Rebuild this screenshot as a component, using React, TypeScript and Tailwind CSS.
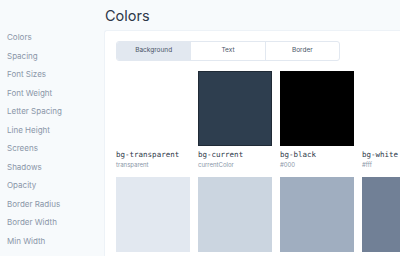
const navItems = [
  'Colors',
  'Spacing',
  'Font Sizes',
  'Font Weight',
  'Letter Spacing',
  'Line Height',
  'Screens',
  'Shadows',
  'Opacity',
  'Border Radius',
  'Border Width',
  'Min Width',
]

const swatches = [
  { name: 'bg-transparent', value: 'transparent', cls: 'bg-transparent' },
  { name: 'bg-current', value: 'currentColor', cls: 'bg-[#2e3e4f] border border-[#1f2a36]' },
  { name: 'bg-black', value: '#000', cls: 'bg-black' },
  { name: 'bg-white', value: '#fff', cls: 'bg-white' },
  { name: 'bg-gray-300', value: '#e2e8f0', cls: 'bg-[#e2e8f0]' },
  { name: 'bg-gray-400', value: '#cbd5e0', cls: 'bg-[#cbd5e0]' },
  { name: 'bg-gray-500', value: '#a0aec0', cls: 'bg-[#a0aec0]' },
  { name: 'bg-gray-600', value: '#718096', cls: 'bg-[#718096]' },
]

export default function App() {
  return (
    <div
      className="flex w-[400px] h-[256px] overflow-hidden bg-[#f7fafc]"
      style={{ fontFamily: 'Inter, "Noto Sans", sans-serif' }}
    >
      {/* Sidebar */}
      <nav className="w-[104px] shrink-0 pl-[7px] pt-[31px] flex flex-col">
        {navItems.map((item) => (
          <span key={item} className="h-[18.5px] text-[8px] leading-[12px] text-[#8a96a8]">
            {item}
          </span>
        ))}
      </nav>

      {/* Main */}
      <main className="flex-1 flex flex-col min-w-0">
        <h1 className="pl-[1px] pt-[7px] h-[30px] text-[14.5px] leading-[18px] text-[#2d3748]">Colors</h1>
        <div className="flex-1 bg-white rounded-tl-[3px] border-l border-t border-[#edf2f7] pl-[11px] pt-[10px]">
          {/* Tabs */}
          <div className="flex w-[224px] h-[20px] rounded-[3px] border border-[#e2e8f0] overflow-hidden text-[6.5px] text-[#4a5568]">
            <div className="flex-1 flex items-center justify-center bg-[#e2e8f0]">Background</div>
            <div className="flex-1 flex items-center justify-center border-l border-[#e2e8f0]">Text</div>
            <div className="flex-1 flex items-center justify-center border-l border-[#e2e8f0]">Border</div>
          </div>

          {/* Swatches */}
          <div className="grid grid-cols-[repeat(4,74px)] gap-x-[8px] gap-y-[7px] mt-[10px]">
            {swatches.map((s) => (
              <div key={s.name} className="flex flex-col">
                <div className={`w-[74px] h-[75px] ${s.cls}`} />
                {s.name.startsWith('bg-gray') ? null : (
                  <div className="pt-[4px]">
                    <div
                      className="text-[7.5px] leading-[10px] text-[#2d3748]"
                      style={{ fontFamily: '"DejaVu Sans Mono", monospace' }}
                    >
                      {s.name}
                    </div>
                    <div className="text-[6px] leading-[10px] text-[#8a96a8]">{s.value}</div>
                  </div>
                )}
              </div>
            ))}
          </div>
        </div>
      </main>
    </div>
  )
}
